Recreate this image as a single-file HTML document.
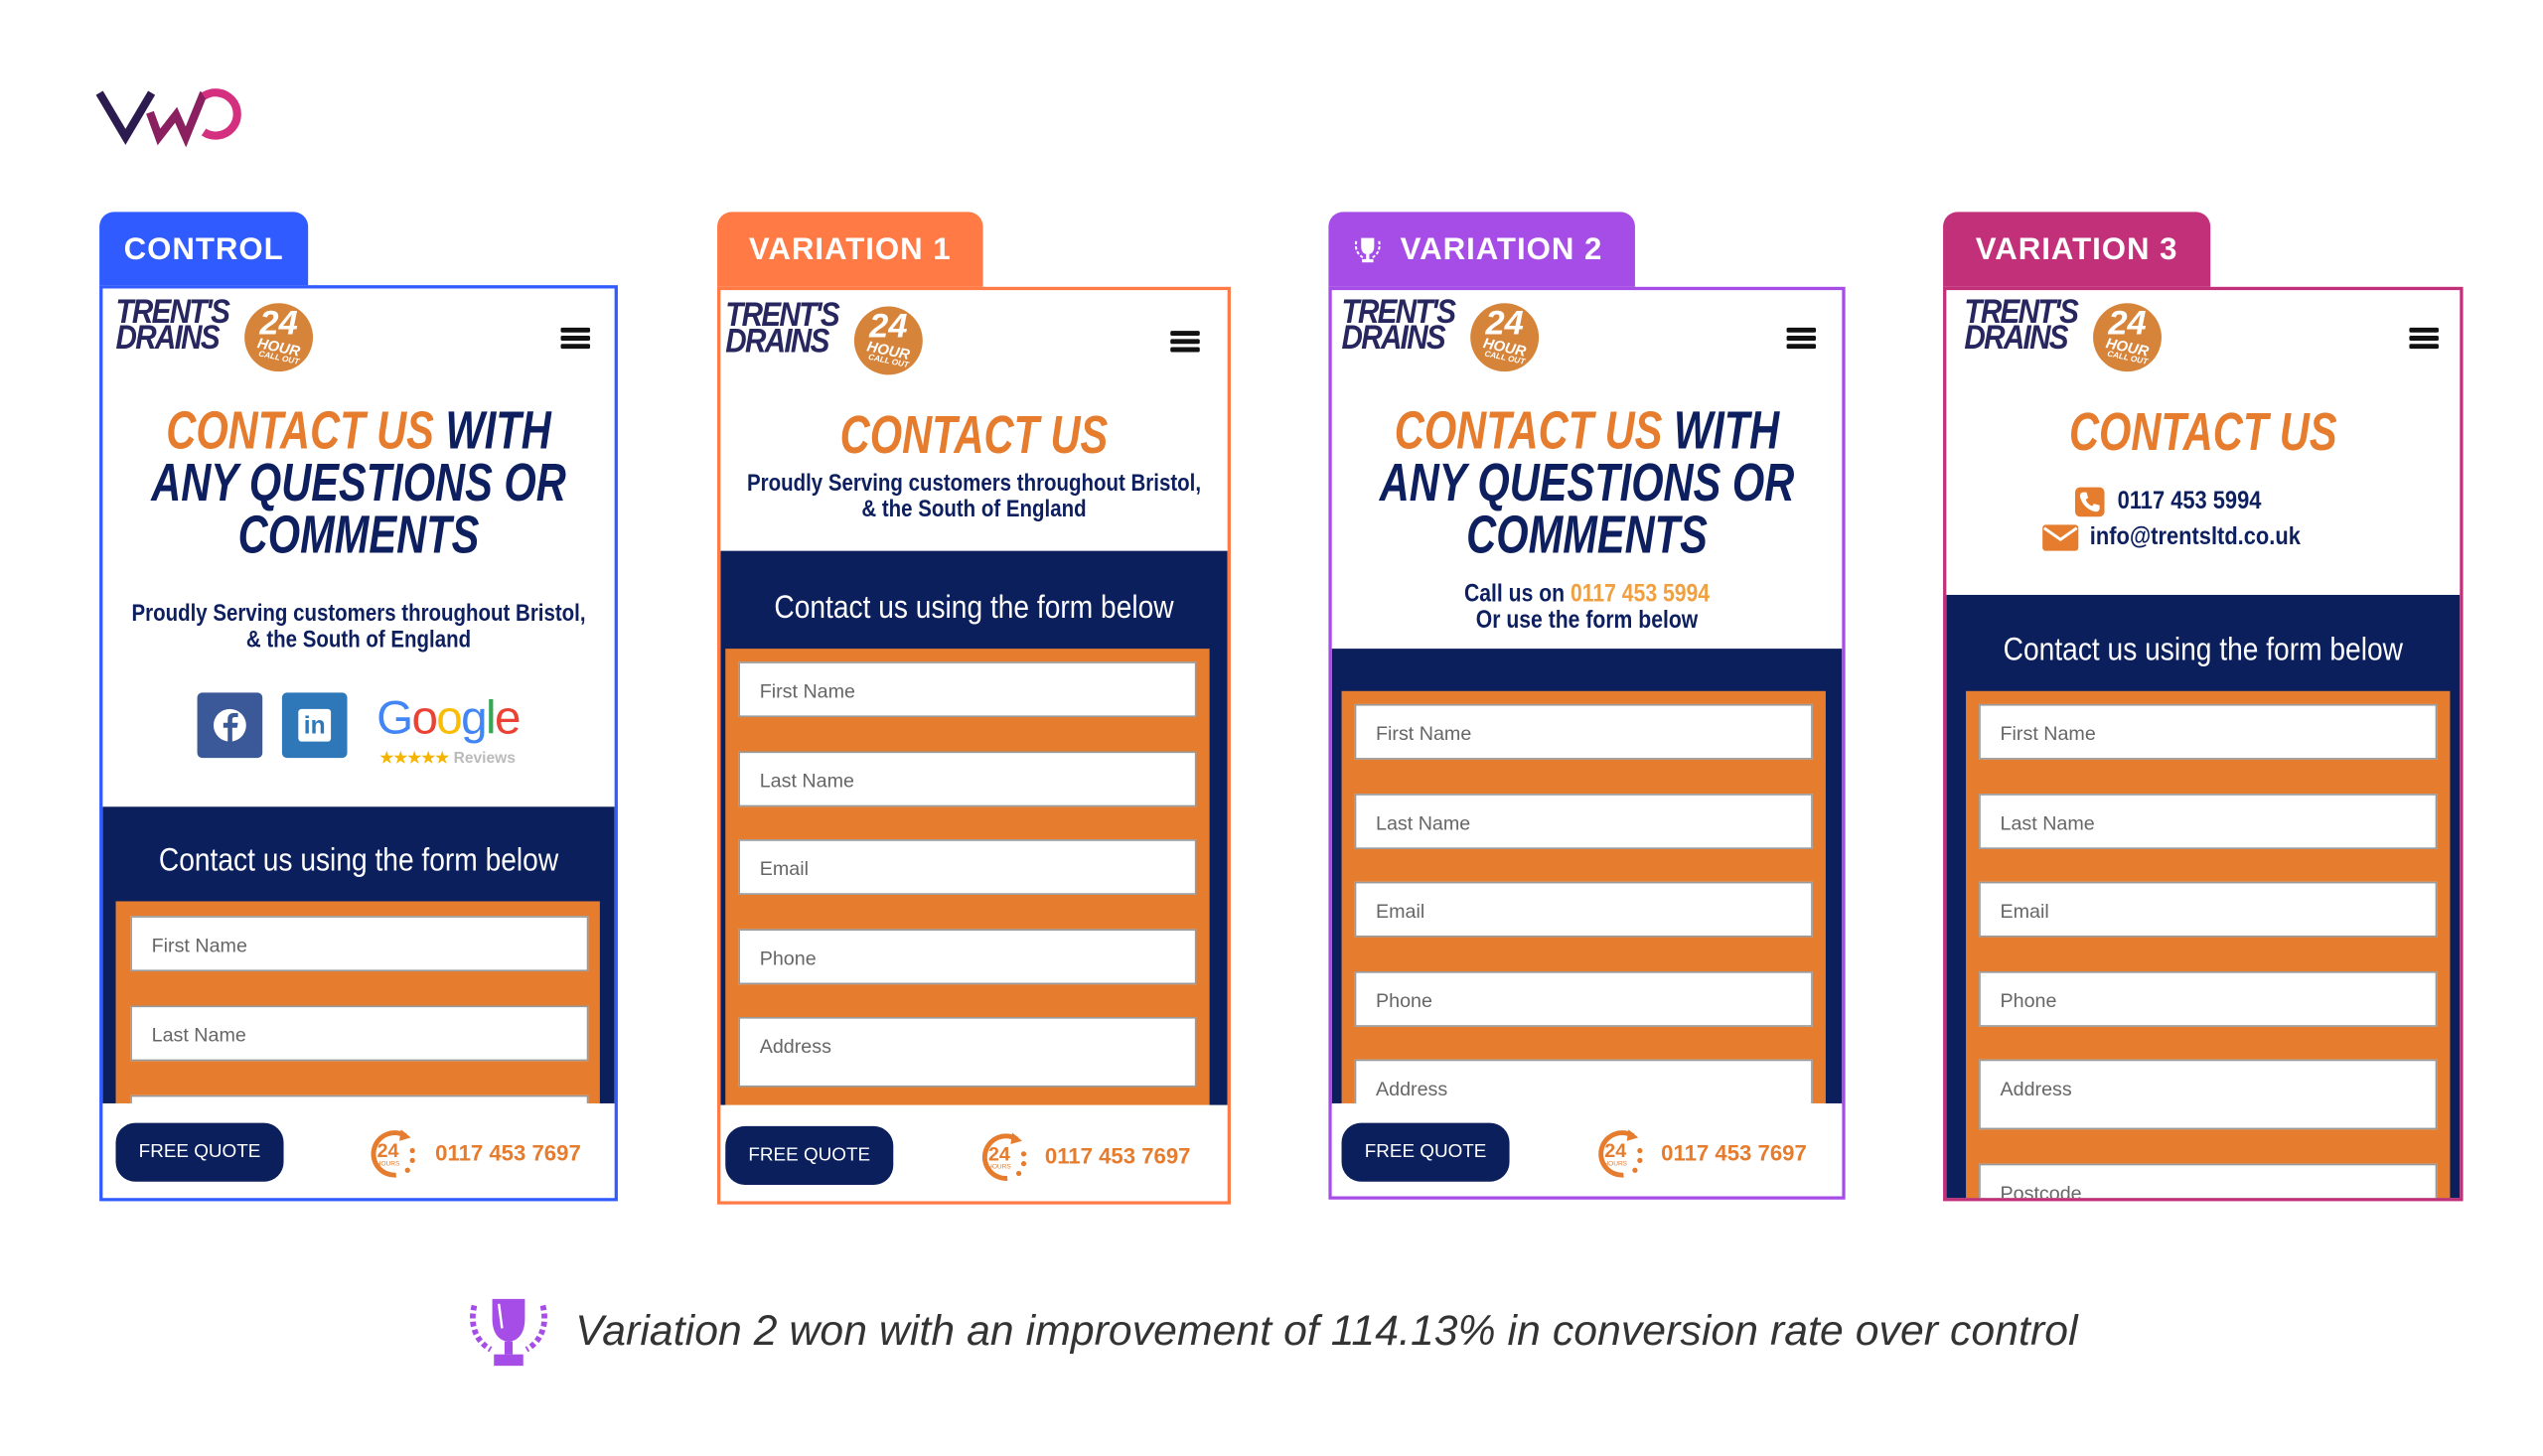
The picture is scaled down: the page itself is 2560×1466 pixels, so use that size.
<!DOCTYPE html>
<html><head><meta charset="utf-8">
<style>
*{margin:0;padding:0;box-sizing:border-box}
html,body{width:2560px;height:1466px;overflow:hidden;background:#fff}
#s{position:absolute;left:0;top:0;width:1560px;height:893px;transform:scale(1.6410);transform-origin:0 0;font-family:"Liberation Sans",sans-serif}
.a{position:absolute}
.tab{position:absolute;height:47px;border-radius:9px 9px 0 0;color:#fff;font-weight:bold;font-size:19px;letter-spacing:.6px;display:flex;align-items:center;justify-content:center}
.panel{position:absolute;background:#fff;overflow:hidden;border:2px solid}
.logo{position:absolute;width:125px;height:46px}
.logo .t{position:absolute;left:0;top:0;font-weight:bold;font-style:italic;font-size:21px;line-height:16px;color:#27265f;letter-spacing:-1.2px;transform:scaleX(.86);transform-origin:0 0}
.logo .c{position:absolute;left:79px;top:2px;width:42px;height:42px;border-radius:50%;background:#d7843b;color:#fff;text-align:center;font-weight:bold;font-style:italic}
.ham{position:absolute;width:18px;height:13px}
.ham i{display:block;height:2.6px;background:#111;margin-bottom:2.6px;border-radius:1px}
.h1{position:absolute;left:-60px;width:calc(100% + 120px);text-align:center;font-weight:bold;font-style:italic;font-size:32.5px;line-height:32px;color:#0d1f5e;transform:scaleX(.78);white-space:nowrap}
.o{color:#e57c2e}
.sub{position:absolute;left:-30px;width:calc(100% + 60px);text-align:center;font-weight:bold;font-size:14.5px;line-height:15.5px;color:#0d1f5e;transform:scaleX(.86);white-space:nowrap}
.navy{position:absolute;left:0;width:100%;background:#0b1f5c}
.ft{position:absolute;left:-30px;width:calc(100% + 60px);text-align:center;color:#fff;font-size:19.5px;line-height:22px;transform:scaleX(.88);white-space:nowrap}
.org{position:absolute;background:#e57c2e;width:297px}
.inp{position:absolute;width:281px;height:34px;background:#fff;border:1px solid #999;font-size:12px;color:#666;padding:10px 0 0 12px}
.bot{position:absolute;left:0;width:100%;background:#fff}
.btn{position:absolute;width:103px;height:36px;background:#0b1f5c;border-radius:12px;color:#fff;font-size:11.5px;text-align:center;line-height:36px}
.ph{position:absolute;color:#e57c2e;font-weight:bold;font-size:13.5px;line-height:18px}
.cl{position:absolute;font-weight:bold;font-size:15.5px;line-height:18px;color:#0d1f5e;transform:scaleX(.86);transform-origin:0 0;white-space:nowrap}
</style></head><body><div id="s">

<!-- VWO logo -->
<svg class="a" style="left:55px;top:48px" width="110" height="44" viewBox="55 48 110 44">
<path d="M61,57 L77,84 L93,57" fill="none" stroke="#2b1b4f" stroke-width="5" stroke-linejoin="miter"/>
<path d="M92,69 L97.5,84 L108,70.5 L114,84 L125,57" fill="none" stroke="#8a2060" stroke-width="5" stroke-linejoin="miter"/>
<path d="M125,59 A13.2,13.2 0 1 1 125,81" fill="none" stroke="#d4307f" stroke-width="5"/>
</svg>

<!-- TABS -->
<div class="tab" style="left:61px;top:130px;width:128px;background:#2f5bff">CONTROL</div>
<div class="tab" style="left:440px;top:130px;width:163px;background:#ff7a45">VARIATION 1</div>
<div class="tab" style="left:815px;top:130px;width:188px;background:#a64de8;justify-content:flex-start;padding-left:14px">
<svg width="20" height="20" viewBox="0 0 20 20" style="margin-right:10px"><path d="M6,2 H14 V7 C14,11 12,12 10,12 C8,12 6,11 6,7 Z" fill="#fff"/><rect x="9" y="12" width="2" height="3" fill="#fff"/><rect x="6.5" y="15" width="7" height="2" fill="#fff"/><path d="M3,4 C2,9 4,12 7,14 M17,4 C18,9 16,12 13,14" fill="none" stroke="#fff" stroke-width="1.2" stroke-dasharray="2 1.2"/></svg>VARIATION 2</div>
<div class="tab" style="left:1192px;top:130px;width:164px;background:#c2307a">VARIATION 3</div>

<!-- CONTROL -->
<div class="panel" style="left:61px;top:175px;width:318px;height:562px;border-color:#2f5bff">
 <div class="logo" style="left:8px;top:7px"><div class="t">TRENT'S<br>DRAINS</div><div class="c"><div style="font-size:21px;line-height:20px;margin-top:3px">24</div><div style="font-size:9px;line-height:8px;transform:rotate(12deg)">HOUR</div><div style="font-size:5px;line-height:6px;transform:rotate(12deg)">CALL OUT</div></div></div>
 <div class="ham" style="left:281px;top:24px"><i></i><i></i><i></i></div>
 <div class="h1" style="top:71px"><span class="o">CONTACT US</span> WITH<br>ANY QUESTIONS OR<br>COMMENTS</div>
 <div class="sub" style="top:193px">Proudly Serving customers throughout Bristol,<br>&amp; the South of England</div>
 <div class="a" style="left:58px;top:248px;width:40px;height:40px;background:#3b5998;border-radius:3px"><svg width="40" height="40"><circle cx="20" cy="20" r="10" fill="#fff"/><path d="M21.5,31 V21.5 H24.5 L25,18.5 H21.5 V16.5 C21.5,15.5 22,15 23,15 H25 V12.5 H22.5 C20,12.5 18.7,14 18.7,16.3 V18.5 H16 V21.5 H18.7 V31 Z" fill="#3b5998"/></svg></div>
 <div class="a" style="left:110px;top:248px;width:40px;height:40px;background:#2e77b8;border-radius:3px"><div style="position:absolute;left:10px;top:10px;width:20px;height:20px;background:#fff;border-radius:2px;color:#2e77b8;font-weight:bold;font-size:15px;line-height:21px;text-align:center">in</div></div>
 <div class="a" style="left:168px;top:248px;font-size:29px;line-height:32px;letter-spacing:-1px"><span style="color:#4285f4">G</span><span style="color:#ea4335">o</span><span style="color:#fbbc05">o</span><span style="color:#4285f4">g</span><span style="color:#34a853">l</span><span style="color:#ea4335">e</span></div>
 <div class="a" style="left:170px;top:283px;font-size:9.5px;color:#bbb;font-weight:bold;white-space:nowrap"><span style="color:#f4b400">★★★★★</span> Reviews</div>
 <div class="navy" style="top:318px;height:183px"></div>
 <div class="ft" style="top:340px">Contact us using the form below</div>
 <div class="org" style="left:8px;top:376px;height:125px"></div>
 <div class="inp" style="left:17px;top:385px">First Name</div>
 <div class="inp" style="left:17px;top:440px">Last Name</div>
 <div class="inp" style="left:17px;top:495px"></div>
 <div class="bot" style="top:500px;height:62px"></div>
 <div class="btn" style="left:8px;top:512px">FREE QUOTE</div>
 <svg class="a" style="left:160px;top:513px" width="36" height="36" viewBox="0 0 36 36"><path d="M26,7 A13,13 0 1 0 20,31" fill="none" stroke="#e57c2e" stroke-width="3"/><path d="M23,3 L29,8 L22,10 Z" fill="#e57c2e"/><circle cx="30" cy="16" r="1.6" fill="#e57c2e"/><circle cx="30" cy="22" r="1.6" fill="#e57c2e"/><circle cx="27" cy="28" r="1.6" fill="#e57c2e"/><text x="15" y="20" text-anchor="middle" font-size="12" font-weight="bold" fill="#e57c2e" font-family="Liberation Sans">24</text><text x="15" y="25" text-anchor="middle" font-size="4" fill="#e57c2e" font-family="Liberation Sans">HOURS</text></svg>
 <div class="ph" style="left:204px;top:522px">0117 453 7697</div>
</div>

<!-- VARIATION 1 -->
<div class="panel" style="left:440px;top:176px;width:315px;height:563px;border-color:#ff7a45">
 <div class="logo" style="left:3px;top:8px"><div class="t">TRENT'S<br>DRAINS</div><div class="c"><div style="font-size:21px;line-height:20px;margin-top:3px">24</div><div style="font-size:9px;line-height:8px;transform:rotate(12deg)">HOUR</div><div style="font-size:5px;line-height:6px;transform:rotate(12deg)">CALL OUT</div></div></div>
 <div class="ham" style="left:276px;top:25px"><i></i><i></i><i></i></div>
 <div class="h1 o" style="top:73px">CONTACT US</div>
 <div class="sub" style="top:112px">Proudly Serving customers throughout Bristol,<br>&amp; the South of England</div>
 <div class="navy" style="top:160px;height:341px"></div>
 <div class="ft" style="top:184px">Contact us using the form below</div>
 <div class="org" style="left:3px;top:220px;height:281px"></div>
 <div class="inp" style="left:11px;top:228px">First Name</div>
 <div class="inp" style="left:11px;top:283px">Last Name</div>
 <div class="inp" style="left:11px;top:337px">Email</div>
 <div class="inp" style="left:11px;top:392px">Phone</div>
 <div class="inp" style="left:11px;top:446px;height:43px">Address</div>
 <div class="bot" style="top:500px;height:63px"></div>
 <div class="btn" style="left:3px;top:513px">FREE QUOTE</div>
 <svg class="a" style="left:156px;top:514px" width="36" height="36" viewBox="0 0 36 36"><path d="M26,7 A13,13 0 1 0 20,31" fill="none" stroke="#e57c2e" stroke-width="3"/><path d="M23,3 L29,8 L22,10 Z" fill="#e57c2e"/><circle cx="30" cy="16" r="1.6" fill="#e57c2e"/><circle cx="30" cy="22" r="1.6" fill="#e57c2e"/><circle cx="27" cy="28" r="1.6" fill="#e57c2e"/><text x="15" y="20" text-anchor="middle" font-size="12" font-weight="bold" fill="#e57c2e" font-family="Liberation Sans">24</text><text x="15" y="25" text-anchor="middle" font-size="4" fill="#e57c2e" font-family="Liberation Sans">HOURS</text></svg>
 <div class="ph" style="left:199px;top:523px">0117 453 7697</div>
</div>

<!-- VARIATION 2 -->
<div class="panel" style="left:815px;top:176px;width:317px;height:560px;border-color:#a64de8">
 <div class="logo" style="left:6px;top:6px"><div class="t">TRENT'S<br>DRAINS</div><div class="c"><div style="font-size:21px;line-height:20px;margin-top:3px">24</div><div style="font-size:9px;line-height:8px;transform:rotate(12deg)">HOUR</div><div style="font-size:5px;line-height:6px;transform:rotate(12deg)">CALL OUT</div></div></div>
 <div class="ham" style="left:279px;top:23px"><i></i><i></i><i></i></div>
 <div class="h1" style="top:70px"><span class="o">CONTACT US</span> WITH<br>ANY QUESTIONS OR<br>COMMENTS</div>
 <div class="sub" style="top:179px;font-size:15px">Call us on <span style="color:#f0a040">0117 453 5994</span><br>Or use the form below</div>
 <div class="navy" style="top:220px;height:280px"></div>
 <div class="org" style="left:6px;top:246px;height:254px"></div>
 <div class="inp" style="left:14px;top:254px">First Name</div>
 <div class="inp" style="left:14px;top:309px">Last Name</div>
 <div class="inp" style="left:14px;top:363px">Email</div>
 <div class="inp" style="left:14px;top:418px">Phone</div>
 <div class="inp" style="left:14px;top:472px;height:43px">Address</div>
 <div class="bot" style="top:499px;height:61px"></div>
 <div class="btn" style="left:6px;top:511px">FREE QUOTE</div>
 <svg class="a" style="left:159px;top:512px" width="36" height="36" viewBox="0 0 36 36"><path d="M26,7 A13,13 0 1 0 20,31" fill="none" stroke="#e57c2e" stroke-width="3"/><path d="M23,3 L29,8 L22,10 Z" fill="#e57c2e"/><circle cx="30" cy="16" r="1.6" fill="#e57c2e"/><circle cx="30" cy="22" r="1.6" fill="#e57c2e"/><circle cx="27" cy="28" r="1.6" fill="#e57c2e"/><text x="15" y="20" text-anchor="middle" font-size="12" font-weight="bold" fill="#e57c2e" font-family="Liberation Sans">24</text><text x="15" y="25" text-anchor="middle" font-size="4" fill="#e57c2e" font-family="Liberation Sans">HOURS</text></svg>
 <div class="ph" style="left:202px;top:521px">0117 453 7697</div>
</div>

<!-- VARIATION 3 -->
<div class="panel" style="left:1192px;top:176px;width:319px;height:561px;border-color:#c2307a">
 <div class="logo" style="left:11px;top:6px"><div class="t">TRENT'S<br>DRAINS</div><div class="c"><div style="font-size:21px;line-height:20px;margin-top:3px">24</div><div style="font-size:9px;line-height:8px;transform:rotate(12deg)">HOUR</div><div style="font-size:5px;line-height:6px;transform:rotate(12deg)">CALL OUT</div></div></div>
 <div class="ham" style="left:284px;top:23px"><i></i><i></i><i></i></div>
 <div class="h1 o" style="top:71px">CONTACT US</div>
 <div class="a" style="left:79px;top:121px;width:18px;height:18px;background:#e57c2e;border-radius:3px"><svg width="18" height="18" viewBox="0 0 18 18"><path d="M5,3 L7,3 L8,6.5 L6.5,7.5 C7.3,9.5 8.5,10.7 10.5,11.5 L11.5,10 L15,11 L15,13 C15,14 14,15 13,15 C8,14.5 3.5,10 3,5 C3,4 4,3 5,3 Z" fill="#fff"/></svg></div>
 <div class="cl" style="left:105px;top:121px">0117 453 5994</div>
 <div class="a" style="left:59px;top:144px;width:22px;height:16px;background:#e57c2e;border-radius:2px"><svg width="22" height="16"><path d="M1,2 L11,9 L21,2" fill="none" stroke="#fff" stroke-width="1.8"/></svg></div>
 <div class="cl" style="left:88px;top:143px">info@trentsltd.co.uk</div>
 <div class="navy" style="top:187px;height:380px"></div>
 <div class="ft" style="top:210px">Contact us using the form below</div>
 <div class="org" style="left:12px;top:246px;height:320px"></div>
 <div class="inp" style="left:20px;top:254px">First Name</div>
 <div class="inp" style="left:20px;top:309px">Last Name</div>
 <div class="inp" style="left:20px;top:363px">Email</div>
 <div class="inp" style="left:20px;top:418px">Phone</div>
 <div class="inp" style="left:20px;top:472px;height:43px">Address</div>
 <div class="inp" style="left:20px;top:536px">Postcode</div>
</div>

<!-- caption -->
<svg class="a" style="left:285px;top:795px" width="54" height="48" viewBox="0 0 54 48"><path d="M17,2 H37 V14 C37,24 32,28 27,28 C22,28 17,24 17,14 Z" fill="#a64de8"/><path d="M21,5 L23,20" stroke="#fff" stroke-width="1.5"/><rect x="24.5" y="28" width="5" height="8" fill="#a64de8"/><rect x="18" y="36" width="18" height="7" fill="#a64de8"/><path d="M6,6 C3,18 7,28 16,33 M48,6 C51,18 47,28 38,33" fill="none" stroke="#a64de8" stroke-width="3.5" stroke-dasharray="3 2"/></svg>
<div class="a" style="left:353px;top:798px;font-style:italic;font-size:26px;line-height:36px;color:#333;white-space:nowrap;letter-spacing:.05px">Variation 2 won with an improvement of 114.13% in conversion rate over control</div>

</div></body></html>
